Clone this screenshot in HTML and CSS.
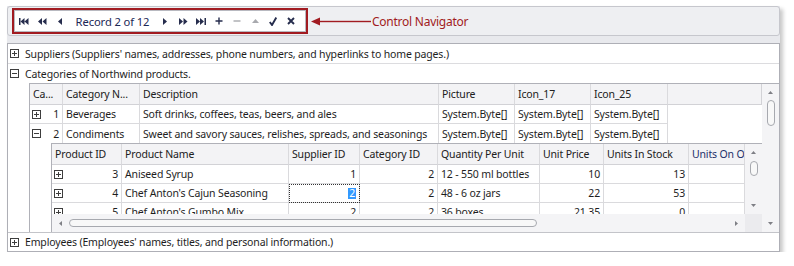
FILE: index.html
```html
<!DOCTYPE html>
<html>
<head>
<meta charset="utf-8">
<link rel="stylesheet" href="styles.css">
</head>
<body>
<div class="window">
  <div class="toolbar">
    <div class="nav-outline">
      <div class="nav">
        <span class="btn"><svg width="10" height="7" viewBox="0 0 10 7"><rect x="0" y="0" width="1.5" height="7"/><path d="M1.5 3.5L5.5 0V7Z M5.5 3.5L9.5 0V7Z"/></svg></span>
        <span class="btn"><svg width="9" height="7" viewBox="0 0 9 7"><path d="M0 3.5L4 0V7Z M4.5 3.5L8.5 0V7Z"/></svg></span>
        <span class="btn"><svg width="4" height="7" viewBox="0 0 4 7"><path d="M0 3.5L4 0V7Z"/></svg></span>
        <span class="rec">Record 2 of 12</span>
        <span class="btn"><svg width="4" height="7" viewBox="0 0 4 7"><path d="M4 3.5L0 0V7Z"/></svg></span>
        <span class="btn"><svg width="9" height="7" viewBox="0 0 9 7"><path d="M4 3.5L0 0V7Z M8.5 3.5L4.5 0V7Z"/></svg></span>
        <span class="btn"><svg width="10" height="7" viewBox="0 0 10 7"><path d="M4 3.5L0 0V7Z M8 3.5L4 0V7Z"/><rect x="8.5" y="0" width="1.5" height="7"/></svg></span>
        <span class="btn"><svg width="8" height="8" viewBox="0 0 8 8"><path d="M4 0.5V7.5 M0.5 4H7.5" class="stk"/></svg></span>
        <span class="btn off"><svg width="8" height="8" viewBox="0 0 8 8"><path d="M0.5 4H7.5" class="stk"/></svg></span>
        <span class="btn off"><svg width="7" height="4" viewBox="0 0 7 4"><path d="M0 4L3.5 0L7 4Z"/></svg></span>
        <span class="btn"><svg width="8" height="9" viewBox="0 0 8 9"><path d="M0.8 5L3 8L7.3 0.5" class="stk bold"/></svg></span>
        <span class="btn"><svg width="8" height="8" viewBox="0 0 8 8"><path d="M1 1L7 7 M7 1L1 7" class="stk bold"/></svg></span>
      </div>
    </div>
    <div class="callout">
      <svg width="60" height="9" viewBox="0 0 60 9"><path d="M0 4.5L9 0.5V8.5Z"/><rect x="8" y="3.8" width="52" height="1.4"/></svg>
      <span class="callout-text">Control Navigator</span>
    </div>
  </div>
  <div class="strip"></div>
  <div class="grid">
    <div class="mrow sep">
      <svg class="exp" width="9" height="9" viewBox="0 0 9 9"><rect x="0.5" y="0.5" width="8" height="8"/><path d="M2 4.5H7 M4.5 2V7"/></svg>
      <span>Suppliers (Suppliers' names, addresses, phone numbers, and hyperlinks to home pages.)</span>
    </div>
    <div class="mrow">
      <svg class="exp" width="9" height="9" viewBox="0 0 9 9"><rect x="0.5" y="0.5" width="8" height="8"/><path d="M2 4.5H7"/></svg>
      <span>Categories of Northwind products.</span>
    </div>
    <div class="detail">
      <div class="cat-main">
        <div class="cat-cols hrow">
          <div class="cell">Ca...</div>
          <div class="cell">Category N...</div>
          <div class="cell">Description</div>
          <div class="cell">Picture</div>
          <div class="cell">Icon_17</div>
          <div class="cell">Icon_25</div>
          <div class="cell last"></div>
        </div>
        <div class="cat-cols drow">
          <div class="cell split"><svg class="exp" width="9" height="9" viewBox="0 0 9 9"><rect x="0.5" y="0.5" width="8" height="8"/><path d="M2 4.5H7 M4.5 2V7"/></svg><span>1</span></div>
          <div class="cell">Beverages</div>
          <div class="cell">Soft drinks, coffees, teas, beers, and ales</div>
          <div class="cell">System.Byte[]</div>
          <div class="cell">System.Byte[]</div>
          <div class="cell">System.Byte[]</div>
          <div class="cell last"></div>
        </div>
        <div class="cat-cols drow open">
          <div class="cell split"><svg class="exp" width="9" height="9" viewBox="0 0 9 9"><rect x="0.5" y="0.5" width="8" height="8"/><path d="M2 4.5H7"/></svg><span>2</span></div>
          <div class="cell">Condiments</div>
          <div class="cell">Sweet and savory sauces, relishes, spreads, and seasonings</div>
          <div class="cell">System.Byte[]</div>
          <div class="cell">System.Byte[]</div>
          <div class="cell">System.Byte[]</div>
          <div class="cell last"></div>
        </div>
        <div class="prod-wrap">
          <div class="prod">
            <div class="prod-table">
              <div class="prod-cols hrow">
                <div class="cell">Product ID</div>
                <div class="cell">Product Name</div>
                <div class="cell">Supplier ID</div>
                <div class="cell">Category ID</div>
                <div class="cell">Quantity Per Unit</div>
                <div class="cell">Unit Price</div>
                <div class="cell">Units In Stock</div>
                <div class="cell hot">Units On Order</div>
              </div>
              <div class="prod-cols drow">
                <div class="cell split"><svg class="exp" width="9" height="9" viewBox="0 0 9 9"><rect x="0.5" y="0.5" width="8" height="8"/><path d="M2 4.5H7 M4.5 2V7"/></svg><span>3</span></div>
                <div class="cell">Aniseed Syrup</div>
                <div class="cell num">1</div>
                <div class="cell num">2</div>
                <div class="cell">12 - 550 ml bottles</div>
                <div class="cell num">10</div>
                <div class="cell num">13</div>
                <div class="cell num"></div>
              </div>
              <div class="prod-cols drow">
                <div class="cell split"><svg class="exp" width="9" height="9" viewBox="0 0 9 9"><rect x="0.5" y="0.5" width="8" height="8"/><path d="M2 4.5H7 M4.5 2V7"/></svg><span>4</span></div>
                <div class="cell">Chef Anton's Cajun Seasoning</div>
                <div class="cell num focus"><span class="sel">2</span></div>
                <div class="cell num">2</div>
                <div class="cell">48 - 6 oz jars</div>
                <div class="cell num">22</div>
                <div class="cell num">53</div>
                <div class="cell num"></div>
              </div>
              <div class="prod-cols drow">
                <div class="cell split"><svg class="exp" width="9" height="9" viewBox="0 0 9 9"><rect x="0.5" y="0.5" width="8" height="8"/><path d="M2 4.5H7 M4.5 2V7"/></svg><span>5</span></div>
                <div class="cell">Chef Anton's Gumbo Mix</div>
                <div class="cell num">2</div>
                <div class="cell num">2</div>
                <div class="cell">36 boxes</div>
                <div class="cell num">21.35</div>
                <div class="cell num">0</div>
                <div class="cell num"></div>
              </div>
            </div>
            <div class="vscroll inner">
              <span class="arr"><svg width="5" height="3" viewBox="0 0 5 3"><path d="M0 3L2.5 0L5 3Z"/></svg></span>
              <span class="thumb vthumb small"></span>
              <span class="fill"></span>
              <span class="arr"><svg width="5" height="3" viewBox="0 0 5 3"><path d="M0 0L2.5 3L5 0Z"/></svg></span>
            </div>
            <div class="hscroll">
              <span class="arr"><svg width="3" height="5" viewBox="0 0 3 5"><path d="M3 0L0 2.5L3 5Z"/></svg></span>
              <span class="thumb hthumb"></span>
              <span class="fill"></span>
              <span class="arr"><svg width="3" height="5" viewBox="0 0 3 5"><path d="M0 0L3 2.5L0 5Z"/></svg></span>
            </div>
            <div class="corner"></div>
          </div>
        </div>
      </div>
      <div class="vscroll outer">
        <span class="arr"><svg width="5" height="3" viewBox="0 0 5 3"><path d="M0 3L2.5 0L5 3Z"/></svg></span>
        <span class="thumb vthumb big"></span>
        <span class="fill"></span>
        <span class="arr"><svg width="5" height="3" viewBox="0 0 5 3"><path d="M0 0L2.5 3L5 0Z"/></svg></span>
      </div>
    </div>
    <div class="mrow emp">
      <svg class="exp" width="9" height="9" viewBox="0 0 9 9"><rect x="0.5" y="0.5" width="8" height="8"/><path d="M2 4.5H7 M4.5 2V7"/></svg>
      <span>Employees (Employees' names, titles, and personal information.)</span>
    </div>
  </div>
</div>
</body>
</html>
```
FILE: styles.css
```css
body {
  margin: 0;
  background: #ffffff;
  font-family: "Noto Sans", "Open Sans", sans-serif;
  font-size: 10.5px;
  letter-spacing: -0.15px;
  color: #1e1e1e;
}

.window {
  margin: 6px 0 0 7px;
  width: 773px;
  background: #e8e9ed;
  box-shadow: 3px 3px 4px rgba(0, 0, 0, 0.22);
}

.toolbar {
  box-sizing: border-box;
  height: 30px;
  border: 1px solid #c6c7cd;
  border-radius: 3px;
  background: #eeeff2;
  display: flex;
  align-items: center;
  padding-left: 4px;
}

.nav-outline {
  box-sizing: border-box;
  width: 296px;
  height: 26px;
  border: 2px solid #a11b21;
}

.nav {
  box-sizing: border-box;
  height: 22px;
  border: 1px solid #b8b9c0;
  background: #ffffff;
  display: flex;
  align-items: center;
}

.btn {
  width: 18px;
  height: 20px;
  display: flex;
  align-items: center;
  justify-content: center;
  fill: #262d4d;
}

.btn svg path.stk {
  fill: none;
  stroke: #262d4d;
  stroke-width: 1.4;
}

.btn svg path.bold {
  stroke-width: 1.9;
}

.btn.off {
  fill: #a8a9ae;
}

.btn.off svg path.stk {
  stroke: #a8a9ae;
}

.rec {
  width: 87px;
  text-align: center;
  font-size: 11.2px;
  letter-spacing: -0.1px;
  color: #1c2756;
  white-space: nowrap;
}

.callout {
  display: flex;
  align-items: center;
  margin-left: 3px;
  fill: #a11b21;
}

.callout-text {
  margin-left: 1px;
  font-size: 12px;
  letter-spacing: -0.25px;
  color: #a11b21;
  white-space: nowrap;
}

.strip {
  height: 7px;
}

.grid {
  border: 1px solid #aeafb6;
  background: #ffffff;
}

.mrow {
  box-sizing: border-box;
  height: 19px;
  display: flex;
  align-items: center;
  gap: 6px;
  padding-left: 2px;
  white-space: nowrap;
}

.mrow.sep {
  height: 20px;
  border-bottom: 1px solid #dcdcdf;
}

.mrow.emp {
  height: 19px;
  border-top: 1px solid #c3c4c9;
}

.exp {
  flex: none;
  fill: #ffffff;
  stroke: #3d3d3d;
  stroke-width: 1;
}

.detail {
  margin-left: 21px;
  border-left: 1px solid #b0b1b8;
  border-top: 1px solid #b0b1b8;
  display: grid;
  grid-template-columns: 732px 17px;
}

.cat-cols {
  display: grid;
  grid-template-columns: 33px 77px 299px 76px 76px 77px 94px;
}

.prod-cols {
  display: grid;
  grid-template-columns: 70px 167px 71px 78px 102px 64px 85px 56px;
}

.cell {
  box-sizing: border-box;
  border-right: 1px solid #dadadd;
  border-bottom: 1px solid #dadadd;
  padding: 0 3px;
  white-space: nowrap;
  overflow: hidden;
  display: flex;
  align-items: center;
}

.hrow {
  height: 21px;
}

.hrow .cell {
  background: #f3f3f5;
  border-bottom-color: #d2d2d6;
  color: #202020;
}

.hrow .cell.last {
  border-right: 1px solid #d2d2d6;
}

.drow {
  height: 19px;
}

.drow .cell.last {
  border: none;
}

.drow.open .cell {
  border-bottom: none;
}

.cell.num {
  justify-content: flex-end;
}

.cell.split {
  justify-content: space-between;
  padding: 0 3px 0 2px;
}

.cell.hot {
  color: #23306a;
}

.cell.focus {
  outline: 1px dotted #333333;
  outline-offset: -1px;
  padding-right: 3px;
}

.sel {
  background: #3399ff;
  color: #ffffff;
  line-height: 11px;
  padding: 0 1px;
}

.prod-wrap {
  padding-left: 21px;
}

.prod {
  border-left: 1px solid #b0b1b8;
  border-top: 1px solid #b0b1b8;
  display: grid;
  grid-template-columns: 693px 17px;
  grid-template-rows: 70px 18px;
}

.prod-table {
  overflow: hidden;
}

.vscroll {
  background: #f4f4f6;
  display: flex;
  flex-direction: column;
  align-items: center;
}

.hscroll {
  background: #f4f4f6;
  display: flex;
  align-items: center;
}

.corner {
  background: #ebebee;
}

.arr {
  width: 17px;
  height: 17px;
  flex: none;
  display: flex;
  align-items: center;
  justify-content: center;
  fill: #7e7f85;
}

.hscroll .arr {
  height: 18px;
}

.fill {
  flex: 1;
}

.thumb {
  box-sizing: border-box;
  border: 1px solid #a7a9af;
  border-radius: 4px;
  background: #f8f8f8;
  flex: none;
}

.vthumb {
  width: 8px;
}

.vthumb.big {
  height: 26px;
  margin-top: -1px;
}

.vthumb.small {
  height: 15px;
}

.hthumb {
  width: 468px;
  height: 8px;
}
```
